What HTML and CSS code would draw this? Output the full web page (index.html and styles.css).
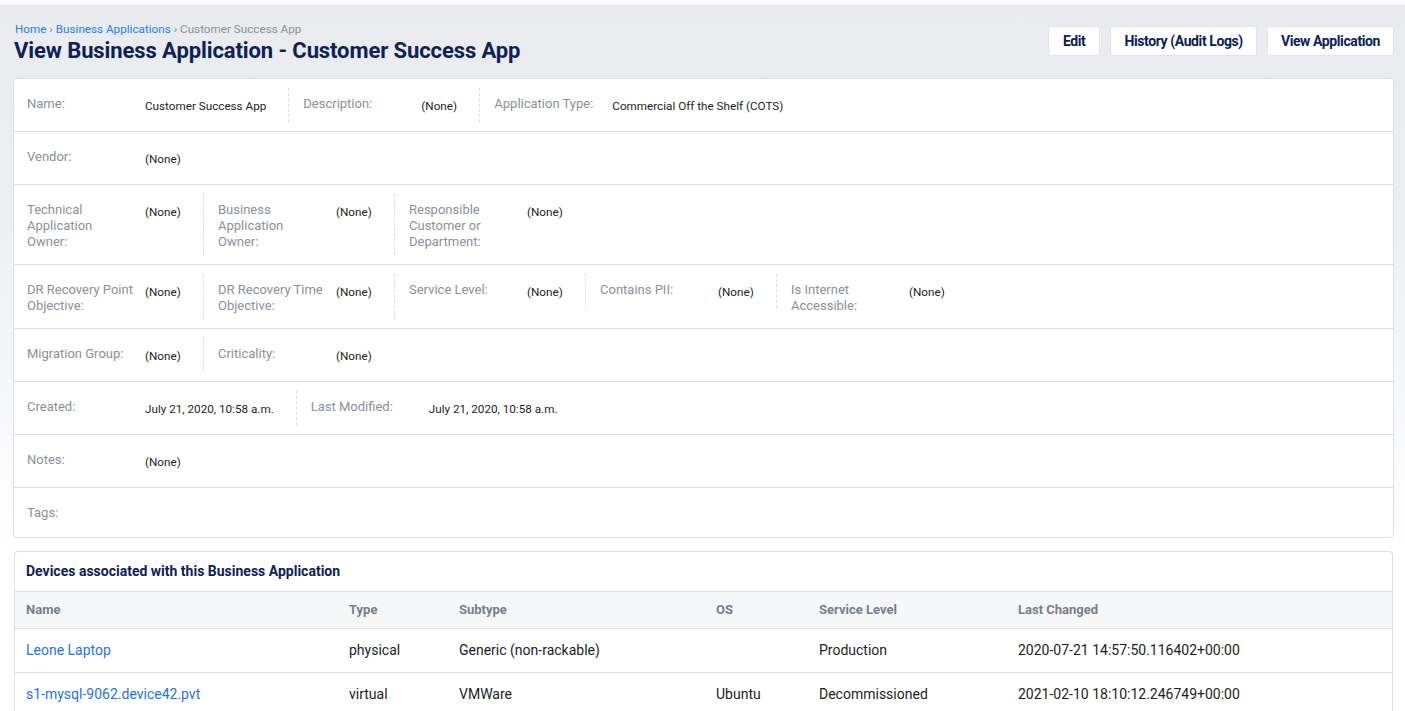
FILE: index.html
```html
<!DOCTYPE html>
<html>
<head>
<meta charset="utf-8">
<link rel="stylesheet" href="styles.css">
</head>
<body>
<div class="topstrip"></div>
<div class="page">
  <div class="header">
    <div class="titles">
      <div class="crumbs"><a href="#">Home</a> <span class="sep">›</span> <a href="#">Business Applications</a> <span class="sep">›</span> <span class="cur">Customer Success App</span></div>
      <h1>View Business Application - Customer Success App</h1>
    </div>
    <div class="actions">
      <button class="btn">Edit</button>
      <button class="btn">History (Audit Logs)</button>
      <button class="btn">View Application</button>
    </div>
  </div>

  <div class="card details">
    <div class="row">
      <div class="field"><div class="lbl">Name:</div><div class="val">Customer Success App</div></div>
      <div class="field"><div class="lbl">Description:</div><div class="val">(None)</div></div>
      <div class="field"><div class="lbl">Application Type:</div><div class="val">Commercial Off the Shelf (COTS)</div></div>
    </div>
    <div class="row">
      <div class="field"><div class="lbl">Vendor:</div><div class="val">(None)</div></div>
    </div>
    <div class="row">
      <div class="field"><div class="lbl">Technical Application Owner:</div><div class="val">(None)</div></div>
      <div class="field"><div class="lbl">Business Application Owner:</div><div class="val">(None)</div></div>
      <div class="field"><div class="lbl">Responsible Customer or Department:</div><div class="val">(None)</div></div>
    </div>
    <div class="row">
      <div class="field"><div class="lbl">DR Recovery Point Objective:</div><div class="val">(None)</div></div>
      <div class="field"><div class="lbl">DR Recovery Time Objective:</div><div class="val">(None)</div></div>
      <div class="field"><div class="lbl">Service Level:</div><div class="val">(None)</div></div>
      <div class="field"><div class="lbl">Contains PII:</div><div class="val">(None)</div></div>
      <div class="field"><div class="lbl">Is Internet Accessible:</div><div class="val">(None)</div></div>
    </div>
    <div class="row">
      <div class="field"><div class="lbl">Migration Group:</div><div class="val">(None)</div></div>
      <div class="field"><div class="lbl">Criticality:</div><div class="val">(None)</div></div>
    </div>
    <div class="row">
      <div class="field"><div class="lbl">Created:</div><div class="val">July 21, 2020, 10:58 a.m.</div></div>
      <div class="field"><div class="lbl">Last Modified:</div><div class="val">July 21, 2020, 10:58 a.m.</div></div>
    </div>
    <div class="row">
      <div class="field"><div class="lbl">Notes:</div><div class="val">(None)</div></div>
    </div>
    <div class="row">
      <div class="field"><div class="lbl">Tags:</div><div class="val"></div></div>
    </div>
  </div>

  <div class="card devices">
    <div class="card-head">Devices associated with this Business Application</div>
    <table class="tbl">
      <thead>
        <tr><th class="c-name">Name</th><th class="c-type">Type</th><th class="c-sub">Subtype</th><th class="c-os">OS</th><th class="c-sl">Service Level</th><th>Last Changed</th></tr>
      </thead>
      <tbody>
        <tr><td><a href="#">Leone Laptop</a></td><td>physical</td><td>Generic (non-rackable)</td><td></td><td>Production</td><td>2020-07-21 14:57:50.116402+00:00</td></tr>
        <tr><td><a href="#">s1-mysql-9062.device42.pvt</a></td><td>virtual</td><td>VMWare</td><td>Ubuntu</td><td>Decommissioned</td><td>2021-02-10 18:10:12.246749+00:00</td></tr>
      </tbody>
    </table>
  </div>
</div>
</body>
</html>
```

FILE: styles.css
```css
* { box-sizing: border-box; }
html, body { margin: 0; padding: 0; }
body {
  font-family: Roboto, "Liberation Sans", sans-serif;
  background: linear-gradient(#e9ebef 0px, #eceef2 200px, #ffffff 545px) no-repeat;
  background-color: #fff;
  color: #222;
  min-height: 711px;
}
.topstrip {
  height: 6px;
  background: #fff;
  border-bottom: 1px solid #dcdfe5;
}
.page {
  padding: 0 11px 0 13px;
}
.header {
  display: flex;
  justify-content: space-between;
  align-items: flex-start;
  height: 72px;
}
.titles { padding-left: 1px; padding-top: 16px; }
.crumbs {
  font-size: 11.7px;
  line-height: 14px;
  color: #8a8f98;
  padding-left: 1px;
}
.crumbs a { color: #2b7de9; text-decoration: none; }
.crumbs .sep { color: #8a8f98; }
h1 {
  margin: 1px 0 0 0;
  font-size: 22px;
  line-height: 28px;
  font-weight: 700;
  color: #0c2155;
  letter-spacing: -0.1px;
}
.actions {
  display: flex;
  gap: 10px;
  padding-top: 20px;
}
.btn {
  font-family: Roboto, "Liberation Sans", sans-serif;
  font-weight: 700;
  font-size: 14px;
  letter-spacing: -0.4px;
  color: #0c2155;
  background: #fff;
  border: 1px solid #e2e4e9;
  border-radius: 3px;
  height: 30px;
  padding: 0 13px;
  cursor: pointer;
}
.btn:first-child { padding: 0 14px; }
.card {
  background: #fff;
  border: 1px solid #dcdfe4;
  border-radius: 4px;
}
.row {
  display: flex;
  align-items: flex-start;
  padding: 9px 0 9px 0;
  border-bottom: 1px solid #dcdfe4;
}
.row:last-child { border-bottom: none; padding-bottom: 6px; }
.field {
  display: flex;
  align-items: flex-start;
  min-height: 34px;
  padding: 8px 22px 5px 13px;
  border-right: 1px dashed #d9dce1;
}
.field:last-child { border-right: none; }
.row .field + .field { padding-left: 14px; }
.lbl {
  width: 118px;
  flex: none;
  font-size: 13px;
  line-height: 16px;
  color: #8b9099;
  padding-right: 11px;
}
.val {
  font-size: 11.7px;
  line-height: 16px;
  padding-top: 2px;
  color: #1d1d24;
  white-space: nowrap;
  min-width: 36px;
}
.devices {
  margin-top: 13px;
  margin-left: 1px;
  margin-right: 1px;
  border-bottom: none;
  border-radius: 4px 4px 0 0;
}
.card-head {
  height: 40px;
  padding: 11px 11px 0 11px;
  font-size: 14px;
  font-weight: 700;
  color: #0c2155;
  border-bottom: 1px solid #dcdfe4;
}
.tbl {
  width: 100%;
  border-collapse: collapse;
}
.tbl th {
  text-align: left;
  background: #f6f7f9;
  height: 36px;
  font-size: 13px;
  font-weight: 700;
  color: #777e89;
  padding: 0 11px;
  border-bottom: 1px solid #dcdfe4;
}
.tbl td {
  height: 44px;
  font-size: 14px;
  color: #1d1d24;
  padding: 0 11px;
  border-bottom: 1px solid #dcdfe4;
}
.tbl td a { color: #1f74e0; text-decoration: none; }
.c-name { width: 323px; }
.c-type { width: 110px; }
.c-sub { width: 257px; }
.c-os { width: 103px; }
.c-sl { width: 199px; }
```
